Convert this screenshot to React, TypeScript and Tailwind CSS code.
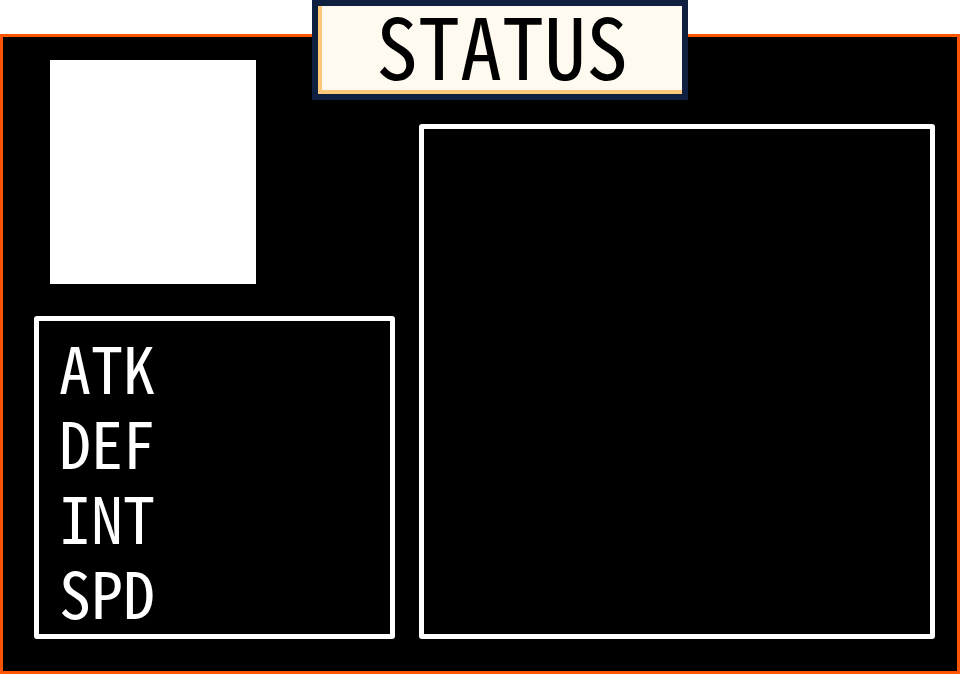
const stats = ['ATK', 'DEF', 'INT', 'SPD'];

const mono = "font-['Noto_Sans_Mono_CJK_JP','Noto_Sans_Mono_CJK_SC',monospace]";

export default function App() {
  return (
    <div className="relative h-[674px] w-[960px] overflow-hidden bg-white">
      {/* main frame */}
      <div className="mt-[34px] flex h-[640px] w-[960px] items-end gap-[24px] border-[3px] border-[#ff5500] bg-black pb-[32px] pl-[31px] pr-[22px]">
        <div className="flex w-[361px] flex-col">
          <div className="ml-[16px] h-[224px] w-[206px] bg-white" />
          <div className={`mt-[32px] flex h-[323px] w-[361px] flex-col rounded-[3px] border-[5px] border-white pl-[20px] pt-[8px] text-[64px] leading-[75px] font-medium text-white ${mono}`}>
            {stats.map((s) => (
              <div key={s} className="h-[75px]">{s}</div>
            ))}
          </div>
        </div>
        <div className="h-[515px] w-[516px] rounded-[3px] border-[5px] border-white" />
      </div>

      {/* title plate */}
      <div className="absolute left-[312px] top-0 h-[100px] w-[376px] border-[6px] border-[#0f1f3f] bg-[#0f1f3f]">
        <div className="flex h-full w-full items-center justify-center border-b-4 border-l-4 border-[#ffc878] bg-[#fffaf0] pb-[8px]">
          <span className={`text-[84px] leading-[80px] font-medium text-black ${mono}`}>STATUS</span>
        </div>
      </div>
    </div>
  );
}
